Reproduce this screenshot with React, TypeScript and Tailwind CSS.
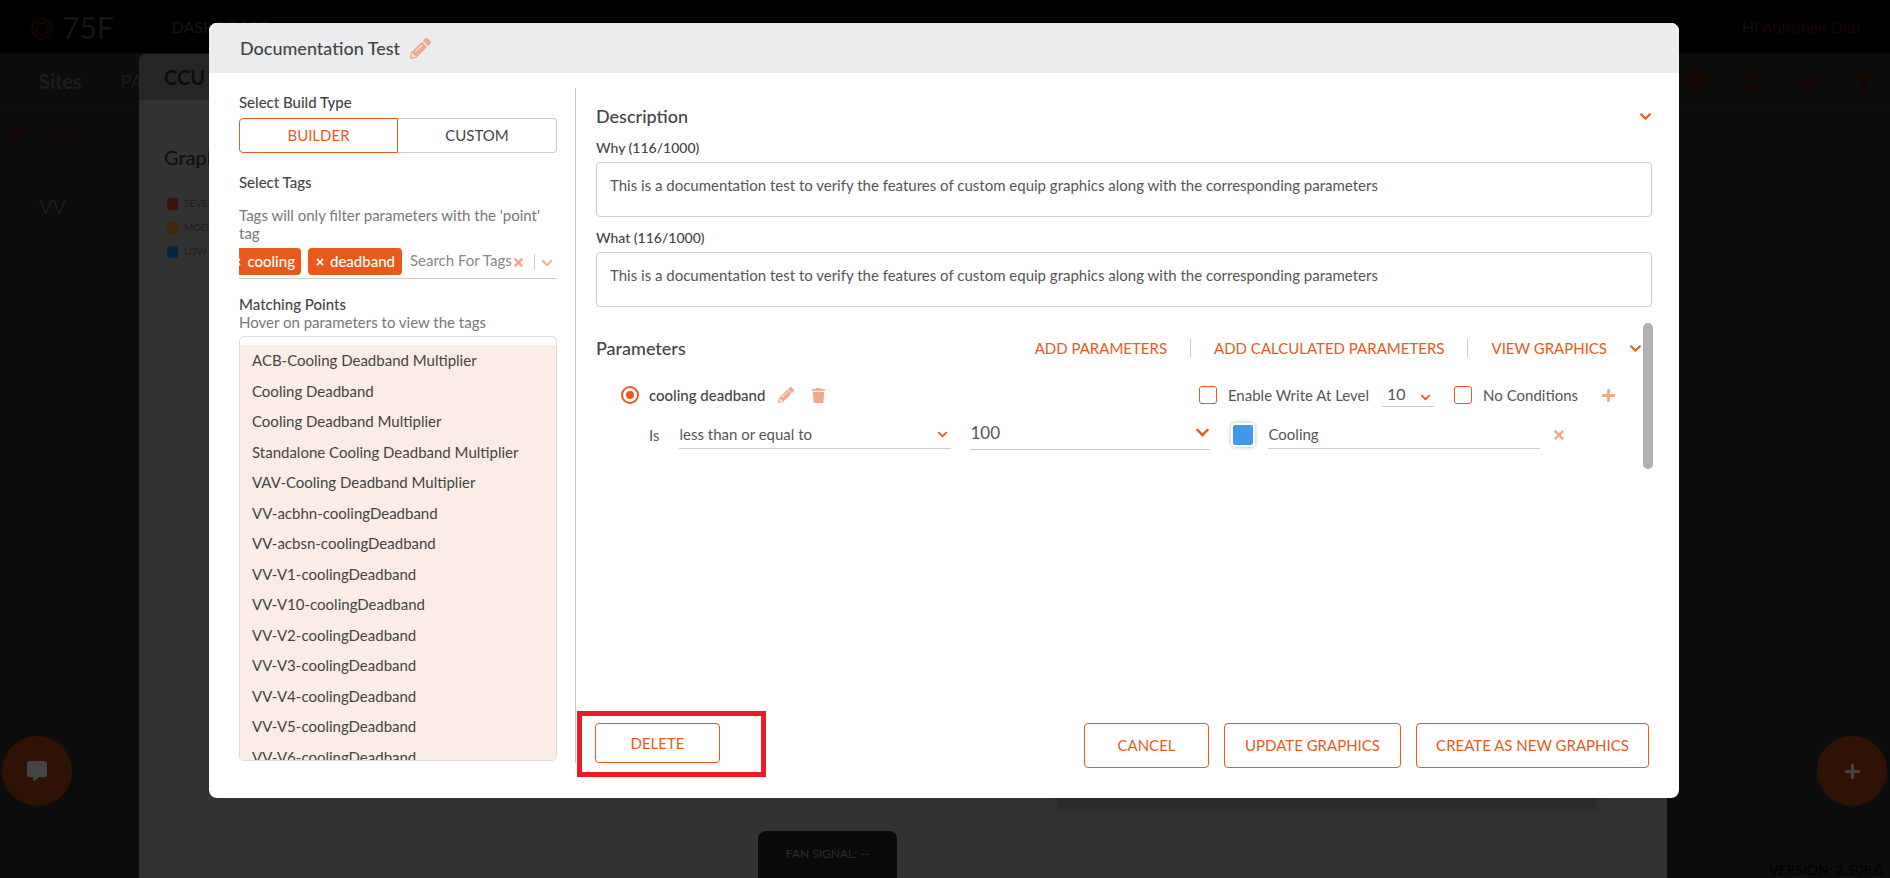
import { FaPencilAlt, FaTrash, FaChevronDown, FaTimes, FaPlus, FaCommentAlt, FaStar, FaFilter, FaSyncAlt, FaThLarge, FaBars } from "react-icons/fa";

const points = [
  "ACB-Cooling Deadband Multiplier",
  "Cooling Deadband",
  "Cooling Deadband Multiplier",
  "Standalone Cooling Deadband Multiplier",
  "VAV-Cooling Deadband Multiplier",
  "VV-acbhn-coolingDeadband",
  "VV-acbsn-coolingDeadband",
  "VV-V1-coolingDeadband",
  "VV-V10-coolingDeadband",
  "VV-V2-coolingDeadband",
  "VV-V3-coolingDeadband",
  "VV-V4-coolingDeadband",
  "VV-V5-coolingDeadband",
  "VV-V6-coolingDeadband",
];

const docText =
  "This is a documentation test to verify the features of custom equip graphics along with the corresponding parameters";

function Backdrop() {
  return (
    <div className="h-[878px] overflow-hidden bg-[#0d0d0d] text-[#1c1c1c]">
      {/* Top bar */}
      <div className="flex h-[53px] items-center bg-black pl-[30px] pr-[30px]">
        <svg width="24" height="28" viewBox="0 0 24 28" fill="none" stroke="#1a0800" strokeWidth="1.5">
          <circle cx="12" cy="16" r="10" />
          <circle cx="12" cy="16" r="6" />
          <path d="M12 2c2 3 3 5 3 8" />
        </svg>
        <span className="ml-[8px] text-[30px] leading-none text-[#171717]">75F</span>
        <span className="ml-[58px] text-[16px] text-[#171717]">DASHBOARD</span>
        <span className="ml-auto text-[16px] text-[#111]">
          Hi <span className="text-[#1a0700]">Abhishek Deb</span>
        </span>
      </div>
      <div className="flex h-[57px] items-center border-b border-[#111] pl-[39px] pr-[16px]">
        <span className="text-[20px] font-bold text-[#1c1c1c]">Sites</span>
        <span className="ml-[39px] text-[18px] text-[#1c1c1c]">PAGES</span>
        <div className="ml-auto flex items-center gap-[36px] text-[20px] text-[#160700]">
          <FaThLarge />
          <FaSyncAlt />
          <FaStar />
          <FaFilter />
        </div>
      </div>
      <div className="flex items-center gap-[18px] pl-[8px] pt-[5px] text-[#1a0700]">
        <FaBars className="text-[18px]" />
        <span className="text-[18px]">CCU1</span>
      </div>
      <div className="pl-[39px] pt-[49px] text-[20px] text-[#1c1c1c]">VV</div>
    </div>
  );
}

function BackModal() {
  return (
    <div className="absolute left-[139px] right-[223px] top-[54px] bottom-0 rounded-t-[8px] bg-[#323232]">
      <div className="flex h-[46px] items-center rounded-t-[8px] bg-[#262626] pl-[25px] text-[20px] font-bold text-[#0d0d0d]">
        CCU
      </div>
      <div className="pl-[25px] pt-[42px] text-[20px] text-[#0d0d0d]">Graphics</div>
      <div className="mt-[24px] flex flex-col gap-[9px] pl-[28px] text-[10px] text-[#1c1c1c]">
        <div className="flex items-center gap-[6px]">
          <span className="h-[12px] w-[11px] rounded-[2px] bg-[#3f1210]" />
          SEVERE
        </div>
        <div className="flex items-center gap-[6px]">
          <span className="h-[12px] w-[11px] rounded-[2px] bg-[#40290d]" />
          MODERATE
        </div>
        <div className="flex items-center gap-[6px]">
          <span className="h-[12px] w-[11px] rounded-[2px] bg-[#08263f]" />
          LOW
        </div>
      </div>
      <div className="absolute bottom-[70px] right-[70px] h-[30px] w-[540px] rounded-b-[6px] bg-[#2a2a2a] shadow-md" />
      <div className="absolute bottom-0 left-[619px] flex h-[47px] w-[139px] items-start justify-center rounded-t-[8px] bg-[#0a0a0a] pt-[14px] text-[12px] text-[#2a2a2a]">
        FAN SIGNAL: --
      </div>
    </div>
  );
}

function OrangeBtn({ label, className }: { label: string; className: string }) {
  return (
    <button className={`rounded-[4px] border border-[#e8591b] bg-white text-[15px] text-[#e8591b] ${className}`}>
      {label}
    </button>
  );
}

function LeftColumn() {
  return (
    <div className="w-[318px] shrink-0">
      <div className="mt-[6px] text-[15px] font-medium leading-[17px] text-[#444]">Select Build Type</div>
      <div className="mt-[7px] flex h-[35px]">
        <div className="flex w-[159px] items-center justify-center rounded-l-[4px] border border-[#e8591b] text-[15px] text-[#e8591b]">
          BUILDER
        </div>
        <div className="flex w-[159px] items-center justify-center rounded-r-[4px] border border-l-0 border-[#ccc] text-[15px] text-[#444]">
          CUSTOM
        </div>
      </div>
      <div className="mt-[21px] text-[15px] font-medium leading-[17px] text-[#444]">Select Tags</div>
      <div className="mt-[15px] text-[15px] leading-[18px] text-[#777]">
        Tags will only filter parameters with the 'point' tag
      </div>
      <div className="mt-[6px] flex h-[31px] items-start overflow-hidden border-b border-[#ccc]">
        <div className="flex h-[27px] w-[62px] shrink-0 items-center justify-end gap-[5px] overflow-hidden rounded-r-[4px] bg-[#e8591b] pr-[6px] text-[15px] font-medium text-white">
          <FaTimes className="shrink-0 text-[10px]" />
          cooling
        </div>
        <div className="ml-[7px] flex h-[27px] w-[94px] shrink-0 items-center justify-center gap-[5px] rounded-[4px] bg-[#e8591b] text-[15px] font-medium text-white">
          <FaTimes className="shrink-0 text-[10px]" />
          deadband
        </div>
        <span className="ml-[8px] shrink-0 text-[15px] leading-[24px] text-[#888]">Search For Tags</span>
        <FaTimes className="mt-[8px] shrink-0 text-[13px] text-[#f2a98b]" />
        <span className="ml-[9px] mt-[6px] h-[16px] w-px shrink-0 bg-[#ccc]" />
        <FaChevronDown className="ml-[6px] mt-[9px] shrink-0 text-[12px] text-[#f2a98b]" />
      </div>
      <div className="mt-[16px] text-[15px] font-medium leading-[18px] text-[#444]">Matching Points</div>
      <div className="text-[15px] leading-[18px] text-[#777]">Hover on parameters to view the tags</div>
      <div className="mt-[5px] h-[425px] overflow-hidden rounded-[5px] border border-[#ddd] pt-[8px]">
        <div className="h-full bg-[#fbece5] pl-[12px]">
          {points.map((p) => (
            <div key={p} className="flex h-[30.5px] items-center text-[15px] text-[#444]">
              {p}
            </div>
          ))}
        </div>
      </div>
    </div>
  );
}

function DocField({ label, mt }: { label: string; mt: string }) {
  return (
    <>
      <div className={`text-[14px] font-medium leading-[16px] text-[#444] ${mt}`}>{label}</div>
      <div className="mt-[6px] h-[55px] rounded-[4px] border border-[#ccc] pl-[13px] pt-[12px] text-[15px] leading-[20px] text-[#555]">
        {docText}
      </div>
    </>
  );
}

function Check({ className }: { className: string }) {
  return <span className={`h-[18px] w-[18px] shrink-0 rounded-[3px] border border-[#e8591b] bg-white ${className}`} />;
}

function ParamLink({ label }: { label: string }) {
  return <span className="text-[15px] text-[#e8591b]">{label}</span>;
}

function Parameters() {
  return (
    <div className="relative mt-[26px] h-[146px]">
      <div className="flex h-[30px] items-center pr-[10px]">
        <span className="text-[18px] font-medium text-[#444]">Parameters</span>
        <div className="ml-auto flex items-center">
          <ParamLink label="ADD PARAMETERS" />
          <span className="mx-[23px] h-[18px] w-px bg-[#ccc]" />
          <ParamLink label="ADD CALCULATED PARAMETERS" />
          <span className="mx-[23px] h-[18px] w-px bg-[#ccc]" />
          <ParamLink label="VIEW GRAPHICS" />
          <FaChevronDown className="ml-[22px] text-[13px] text-[#e8591b]" />
        </div>
      </div>
      <div className="mt-[22px] flex h-[20px] items-center pr-[36px]">
        <span className="ml-[25px] flex h-[18px] w-[18px] items-center justify-center rounded-full border-2 border-[#e8591b]">
          <span className="h-[8px] w-[8px] rounded-full bg-[#e8591b]" />
        </span>
        <span className="ml-[10px] text-[15px] font-medium text-[#444]">cooling deadband</span>
        <FaPencilAlt className="ml-[13px] text-[16px] text-[#f2a98b]" />
        <FaTrash className="ml-[17px] text-[15px] text-[#f2a98b]" />
        <div className="ml-auto flex items-center">
          <Check className="" />
          <span className="ml-[11px] text-[15px] text-[#555]">Enable Write At Level</span>
          <div className="relative ml-[13px] flex h-[24px] w-[52px] items-center border-b border-[#ccc] pb-[2px] pl-[5px] text-[16px] text-[#555]">
            10
            <FaChevronDown className="absolute right-[3px] top-[9px] text-[11px] text-[#e8591b]" />
          </div>
          <Check className="ml-[20px]" />
          <span className="ml-[11px] text-[15px] text-[#555]">No Conditions</span>
          <FaPlus className="ml-[23px] text-[15px] text-[#f2a98b]" />
        </div>
      </div>
      <div className="mt-[13px] flex h-[34px] items-center">
        <span className="ml-[53px] text-[15px] text-[#555]">Is</span>
        <div className="ml-[20px] flex h-[28px] w-[272px] items-center justify-between border-b border-[#ccc] pr-[3px] text-[15px] text-[#555]">
          less than or equal to
          <FaChevronDown className="text-[11px] text-[#e8591b]" />
        </div>
        <div className="ml-[19px] flex h-[30px] w-[240px] items-center justify-between border-b border-[#ccc] pb-[4px] text-[17px] text-[#555]">
          100
          <FaChevronDown className="text-[15px] text-[#e8591b]" />
        </div>
        <span className="ml-[21px] h-[24px] w-[24px] rounded-[4px] border-2 border-white bg-[#4299e9] shadow-[0_0_4px_rgba(0,0,0,0.3)]" />
        <div className="ml-[13px] flex h-[28px] w-[272px] items-center border-b border-[#ccc] text-[15px] text-[#555]">
          Cooling
        </div>
        <FaTimes className="ml-[12px] text-[14px] text-[#f2a98b]" />
      </div>
      <div className="absolute right-[-1px] top-[-10px] h-[146px] w-[10px] rounded-[5px] bg-[#b0b0b0]" />
    </div>
  );
}

function Modal() {
  return (
    <div className="absolute left-[209px] top-[23px] flex h-[775px] w-[1470px] flex-col overflow-hidden rounded-[8px] bg-white">
      <div className="flex h-[50px] shrink-0 items-center gap-[10px] bg-[#ebecee] pl-[31px]">
        <span className="text-[18px] font-medium text-[#444]">Documentation Test</span>
        <FaPencilAlt className="text-[21px] text-[#f2a98b]" />
      </div>
      <div className="flex min-h-0 flex-1 pl-[30px] pt-[15px]">
        <LeftColumn />
        <div className="ml-[18px] h-[675px] w-px shrink-0 bg-[#ccc]" />
        <div className="flex w-[1076px] shrink-0 flex-col pl-[20px]">
          <div className="mt-[18px] flex h-[20px] items-center justify-between">
            <span className="text-[18px] font-medium text-[#444]">Description</span>
            <FaChevronDown className="text-[13px] text-[#e8591b]" />
          </div>
          <DocField label="Why (116/1000)" mt="mt-[14px]" />
          <DocField label="What (116/1000)" mt="mt-[13px]" />
          <Parameters />
          <div className="mt-auto flex items-start justify-between pb-[30px] pr-[3px]">
            <OrangeBtn label="DELETE" className="ml-[-1px] h-[40px] w-[125px]" />
            <div className="flex gap-[15px]">
              <OrangeBtn label="CANCEL" className="h-[45px] w-[125px]" />
              <OrangeBtn label="UPDATE GRAPHICS" className="h-[45px] w-[177px]" />
              <OrangeBtn label="CREATE AS NEW GRAPHICS" className="h-[45px] w-[233px]" />
            </div>
          </div>
        </div>
      </div>
    </div>
  );
}

export default function App() {
  return (
    <div className="relative h-[878px] w-[1890px] overflow-hidden font-['Lato','Liberation_Sans',sans-serif]">
      <Backdrop />
      <BackModal />
      <div className="absolute left-[2px] top-[736px] flex h-[70px] w-[70px] items-center justify-center rounded-full bg-[#2e1204] text-[20px] text-[#444]">
        <FaCommentAlt />
      </div>
      <div className="absolute left-[1817px] top-[736px] flex h-[70px] w-[70px] items-center justify-center rounded-full bg-[#2e1204] text-[17px] text-[#444]">
        <FaPlus />
      </div>
      <div className="absolute bottom-0 right-[7px] text-[14px] leading-[16px] text-[#000]">VERSION: 2.508.0</div>
      <Modal />
      {/* red annotation round the delete button */}
      <div className="absolute left-[577px] top-[711px] h-[66px] w-[189px] border-[5px] border-[#ed1c24]" />
    </div>
  );
}
